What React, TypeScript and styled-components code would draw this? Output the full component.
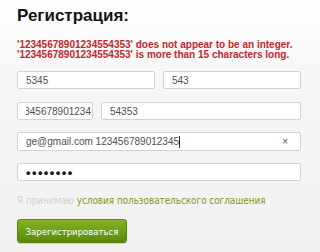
import React from "react";
import styled, { createGlobalStyle } from "styled-components";

const Global = createGlobalStyle`
  html, body { margin: 0; padding: 0; }
  body {
    width: 320px; height: 252px; overflow: hidden;
    background: linear-gradient(#ffffff 0px, #f7f7f7 70px, #f1f1f1 252px);
    font-family: "Liberation Sans", Arimo, Arial, sans-serif;
  }
`;

const Page = styled.div`
  display: flex;
  flex-direction: column;
  padding: 4px 19px 0 17px;
`;

const Title = styled.h1`
  margin: 0;
  font-family: "Liberation Sans", Arial, sans-serif;
  font-size: 17px;
  line-height: 24px;
  font-weight: bold;
  color: #141414;
`;

const Errors = styled.div`
  margin-top: 12px;
  display: flex;
  flex-direction: column;
  font-family: "Liberation Sans", Arial, sans-serif;
  font-size: 10px;
  line-height: 10px;
  font-weight: bold;
  color: #c1272d;
  white-space: nowrap;
`;

const Row = styled.div<{ $cols: string; $mt: number }>`
  display: grid;
  grid-template-columns: ${(p) => p.$cols};
  gap: 8px;
  margin-top: ${(p) => p.$mt}px;
`;

const Field = styled.div<{ $h?: number; $pr?: number }>`
  position: relative;
  height: ${(p) => p.$h || 18}px;
  box-sizing: border-box;
  border: 1px solid #d2d2d2;
  border-radius: 2px;
  background: #fff;
  display: flex;
  align-items: center;
  padding: 0 ${(p) => (p.$pr ?? 8)}px 0 8px;
  overflow: hidden;
  font-family: "Liberation Sans", Arial, sans-serif;
  font-size: 10px;
  color: #505050;
  white-space: nowrap;
`;

const Scrolled = styled.div`
  flex: 1;
  min-width: 0;
  display: flex;
  justify-content: flex-end;
  overflow: hidden;
`;

const Caret = styled.span`
  display: inline-block;
  width: 1px;
  height: 12px;
  background: #222;
`;

const Clear = styled.span`
  position: absolute;
  right: 12px;
  top: 3px;
  font-size: 10px;
  color: #555;
`;

const Dots = styled.span`
  font-size: 13px;
  letter-spacing: 1.4px;
  color: #1a1a1a;
  font-weight: bold;
`;

const Agree = styled.div`
  margin-top: 14px;
  font-family: "DejaVu Sans Condensed", "DejaVu Sans", Verdana, sans-serif;
  font-stretch: condensed;
  font-size: 9.8px;
  line-height: 12px;
  color: #d0d0d0;
  white-space: nowrap;
`;

const Link = styled.span`
  color: #7a9a1e;
`;

const Button = styled.button`
  margin-top: 12px;
  align-self: flex-start;
  width: 110px;
  height: 24px;
  border: 1px solid #5a870c;
  border-radius: 3px;
  background: linear-gradient(#84b323, #5a8a0a);
  color: #fff;
  font-family: "DejaVu Sans Condensed", "DejaVu Sans", sans-serif;
  font-stretch: condensed;
  font-size: 9.5px;
  padding: 0;
  white-space: nowrap;
  box-shadow: 0 1px 1px rgba(0, 0, 0, 0.15);
`;

export default function App() {
  return (
    <>
      <Global />
      <Page>
        <Title>Регистрация:</Title>
        <Errors>
          <span>'12345678901234554353' does not appear to be an integer.</span>
          <span>'12345678901234554353' is more than 15 characters long.</span>
        </Errors>
        <Row $cols="1fr 1fr" $mt={11}>
          <Field>5345</Field>
          <Field>543</Field>
        </Row>
        <Row $cols="76px 1fr" $mt={13}>
          <Field $pr={1}>
            <Scrolled>12345678901234</Scrolled>
          </Field>
          <Field>54353</Field>
        </Row>
        <Row $cols="1fr" $mt={12}>
          <Field $h={19}>
            ge@gmail.com 123456789012345
            <Caret />
            <Clear>×</Clear>
          </Field>
        </Row>
        <Row $cols="1fr" $mt={12}>
          <Field>
            <Dots>••••••••</Dots>
          </Field>
        </Row>
        <Agree>
          Я принимаю <Link>условия пользовательского соглашения</Link>
        </Agree>
        <Button>Зарегистрироваться</Button>
      </Page>
    </>
  );
}
